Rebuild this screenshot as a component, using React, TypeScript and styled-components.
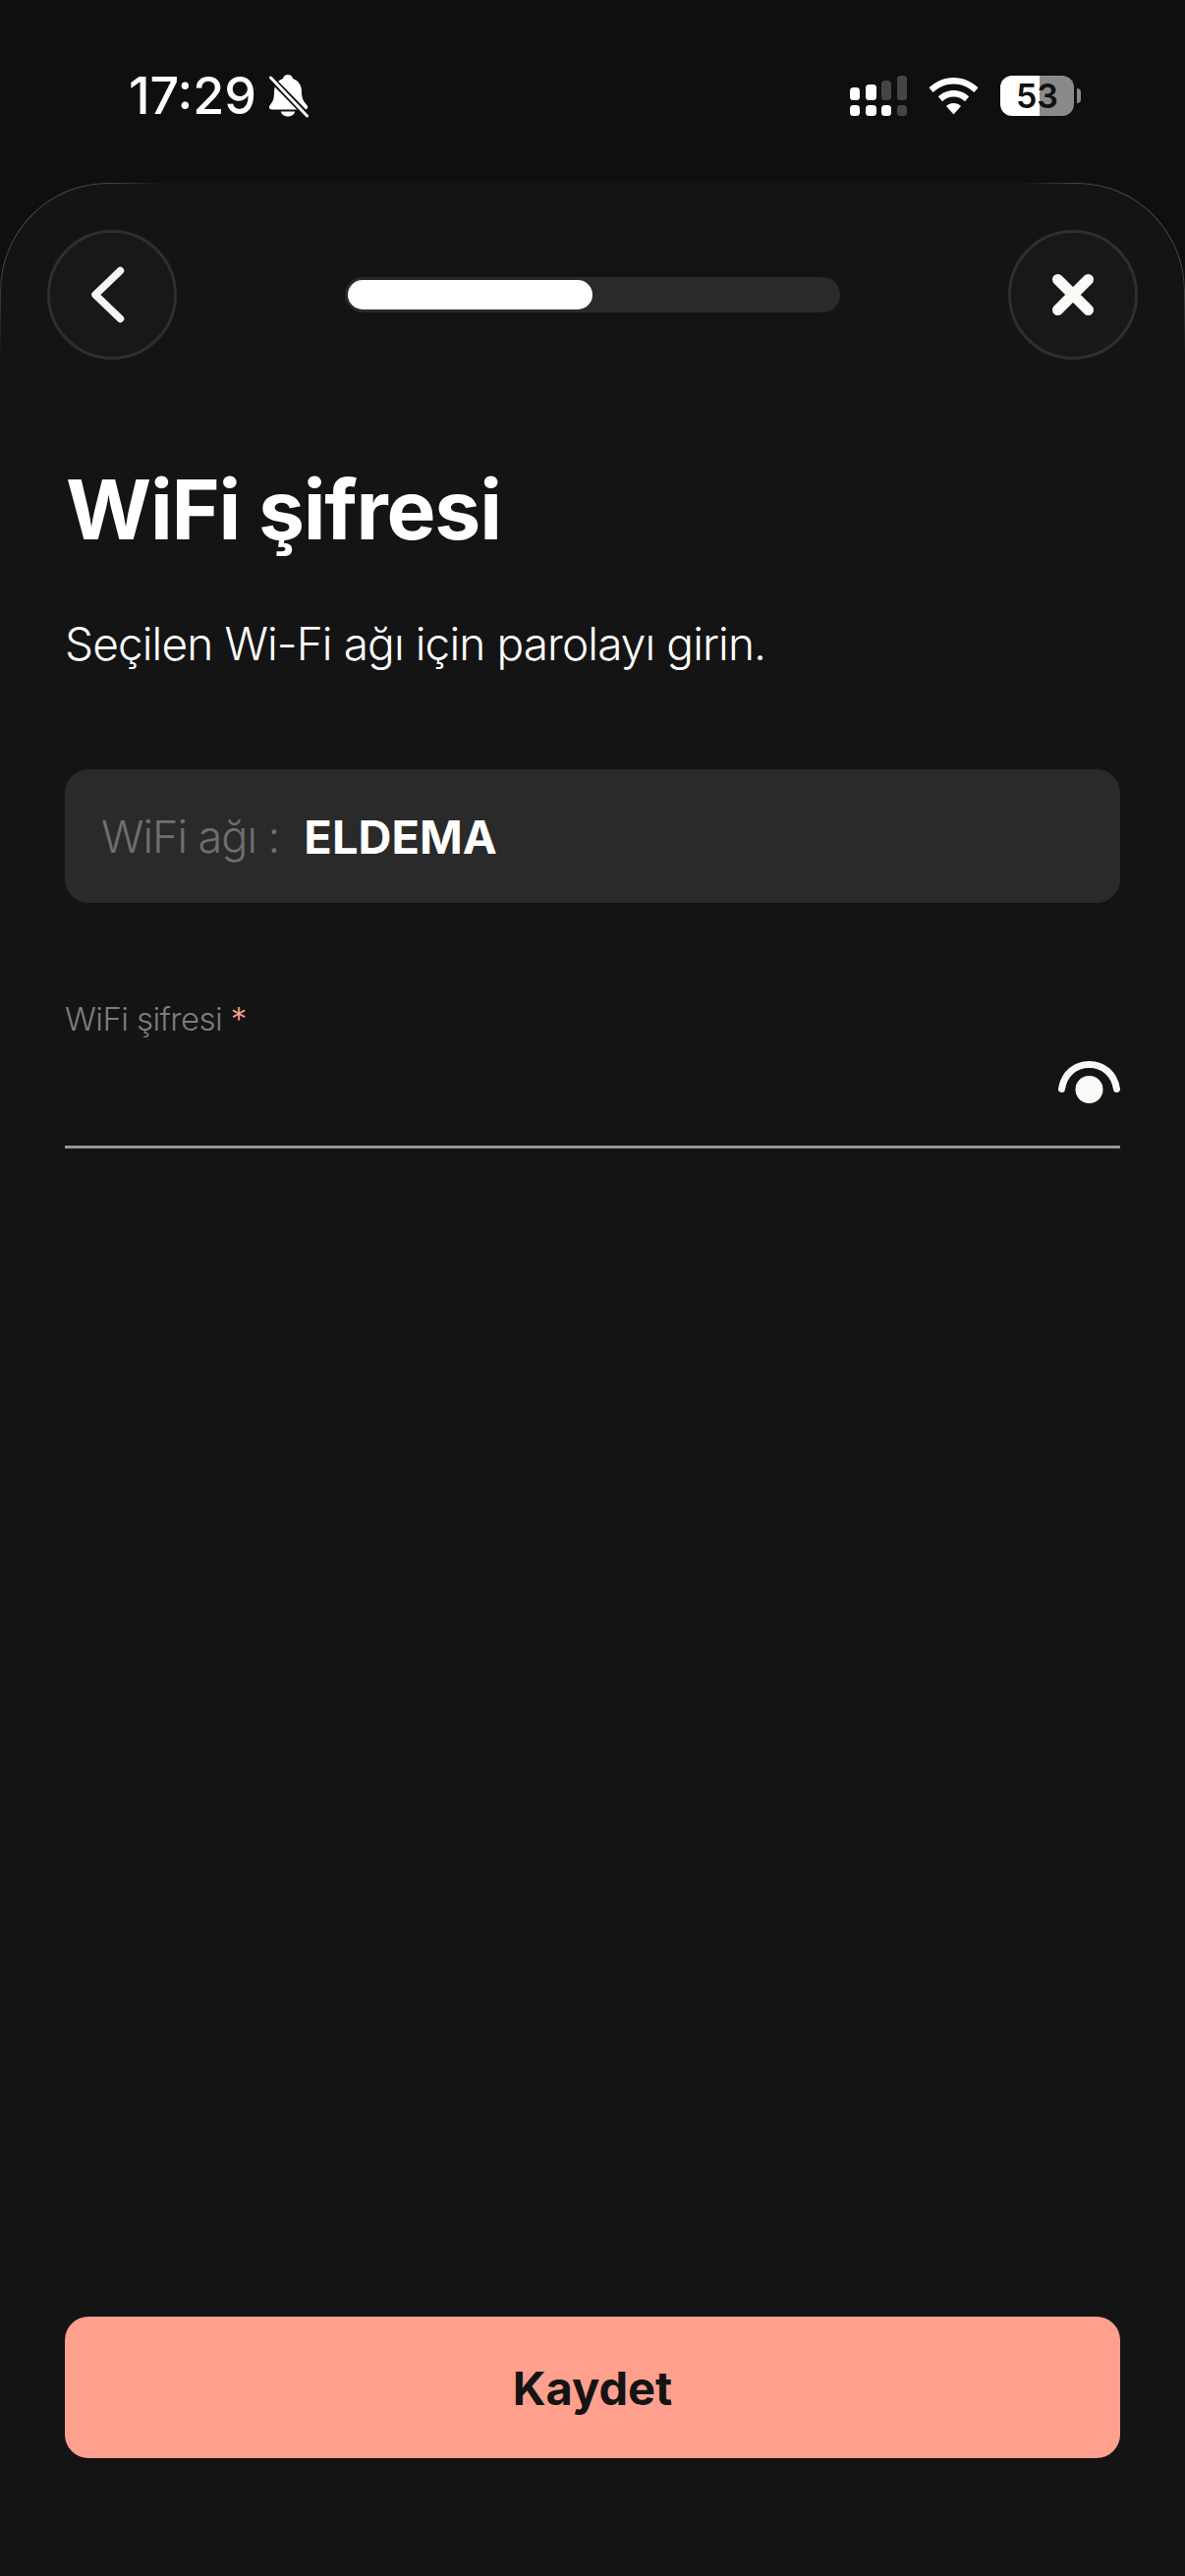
import React from "react";
import styled, { createGlobalStyle } from "styled-components";

const Global = createGlobalStyle`
  html, body { margin: 0; padding: 0; background: #0f0f0f; }
  * { box-sizing: border-box; }
  body { font-family: "Inter", "Noto Sans", sans-serif; }
`;

const Screen = styled.div`
  width: 1206px;
  height: 2622px;
  display: flex;
  flex-direction: column;
  background: #0f0f0f;
  overflow: hidden;
`;

const StatusBar = styled.header`
  height: 186px;
  flex: none;
  display: flex;
  justify-content: space-between;
  align-items: flex-start;
  padding: 77px 106px 0 131px;
`;

const StatusLeft = styled.div`
  display: flex;
  align-items: center;
  gap: 13px;
  height: 42px;
`;

const Clock = styled.span`
  font-size: 52px;
  font-weight: 500;
  line-height: 42px;
  letter-spacing: 0;
  color: #fff;
`;

const StatusRight = styled.div`
  display: flex;
  align-items: center;
  gap: 22px;
  height: 41px;
`;

const Battery = styled.div`
  display: flex;
  align-items: center;
  gap: 3px;
`;

const BatteryBody = styled.div`
  width: 75px;
  height: 41px;
  border-radius: 12px;
  background: linear-gradient(to right, #fff 0, #fff 40px, #8a8a8a 40px, #8a8a8a 100%);
  display: flex;
  align-items: center;
  justify-content: center;
  font-size: 34px;
  font-weight: 600;
  color: #111;
`;

const BatteryNub = styled.div`
  width: 4px;
  height: 15px;
  border-radius: 0 4px 4px 0;
  background: #8a8a8a;
`;

const Sheet = styled.main`
  position: relative;
  flex: 1;
  display: flex;
  flex-direction: column;
  background: #141414;
  border-radius: 110px 110px 0 0;
  padding: 48px 48px 120px;

  &::before {
    content: "";
    position: absolute;
    top: 0;
    left: 0;
    right: 0;
    height: 175px;
    border: 1px solid #505050;
    border-bottom: none;
    border-radius: 110px 110px 0 0;
    pointer-events: none;
    -webkit-mask-image:
      linear-gradient(to right, #000 0, #000 100px, transparent 165px, transparent calc(100% - 165px), #000 calc(100% - 100px), #000 100%),
      linear-gradient(to bottom, #000 0, #000 80px, transparent 100%);
    -webkit-mask-composite: source-in;
    mask-composite: intersect;
  }
`;

const TopBar = styled.nav`
  display: flex;
  align-items: center;
  justify-content: space-between;
  height: 132px;
  flex: none;
`;

const RoundButton = styled.button`
  width: 132px;
  height: 132px;
  flex: none;
  padding: 0;
  border-radius: 50%;
  border: 3px solid #2f2f2f;
  background: #181818;
  box-shadow: 0 0 24px rgba(255, 255, 255, 0.012);
  display: flex;
  align-items: center;
  justify-content: center;
`;

const Progress = styled.div`
  width: 504px;
  height: 36px;
  padding: 3px;
  border-radius: 18px;
  background: #2a2a2a;
`;

const ProgressFill = styled.div`
  height: 30px;
  border-radius: 15px;
  background: #fff;
`;

const Content = styled.section`
  flex: 1;
  display: flex;
  flex-direction: column;
  padding: 0 18px;
`;

const Title = styled.h1`
  margin: 105px 0 0 1px;
  font-size: 84px;
  line-height: 96px;
  font-weight: 700;
  letter-spacing: -1.2px;
  color: #fff;
`;

const Subtitle = styled.p`
  margin: 58px 0 0;
  font-size: 46px;
  line-height: 60px;
  font-weight: 300;
  letter-spacing: -0.9px;
  color: #fff;
`;

const NetworkBox = styled.div`
  margin-top: 98px;
  height: 136px;
  flex: none;
  border-radius: 24px;
  background: #2a2a2a;
  display: flex;
  align-items: center;
  gap: 25px;
  padding: 0 37px;
  font-size: 45px;
`;

const NetworkLabel = styled.span`
  font-weight: 300;
  color: #6f6f6f;
  letter-spacing: -1px;
`;

const NetworkName = styled.span`
  font-size: 47px;
  font-weight: 700;
  color: #fff;
`;

const Field = styled.label`
  margin-top: 98px;
  display: flex;
  flex-direction: column;
  border-bottom: 3px solid #979797;
  height: 152px;
  flex: none;
`;

const FieldLabel = styled.span`
  font-size: 33px;
  line-height: 40px;
  font-weight: 300;
  letter-spacing: -0.6px;
  color: #7d7d7d;
`;

const Required = styled.span`
  color: #ffa08e;
`;

const FieldRow = styled.div`
  display: flex;
  justify-content: flex-end;
  padding-top: 23px;
`;

const Spacer = styled.div`
  flex: 1;
`;

const SaveButton = styled.button`
  height: 144px;
  flex: none;
  border: none;
  border-radius: 24px;
  background: #ffa08e;
  color: #141414;
  font-family: inherit;
  font-size: 47px;
  font-weight: 700;
`;

const BackGlyph = styled.svg`
  margin-right: 8px;
`;

const SignalIcon = () => (
  <svg width="58" height="41" viewBox="0 0 58 41">
    <g fill="#fff">
      <rect x="0" y="12" width="10" height="13" rx="3.5" />
      <rect x="16" y="9" width="11" height="16" rx="3.5" />
      <rect x="0" y="30" width="10" height="11" rx="3.5" />
      <rect x="16" y="30" width="11" height="11" rx="3.5" />
      <rect x="32" y="30" width="10" height="11" rx="3.5" />
    </g>
    <g fill="#454545">
      <rect x="32" y="5" width="10" height="20" rx="3.5" />
      <rect x="48" y="0" width="10" height="25" rx="3.5" />
      <rect x="48" y="30" width="10" height="11" rx="3.5" />
    </g>
  </svg>
);

const WifiIcon = () => (
  <svg width="51" height="38" viewBox="0 0 51 38">
    <path fill="#fff" d="M25.5 0C35 0 43.8 3.8 50.5 10.2L46.4 15C40.8 9.6 33.5 6.4 25.5 6.4S10.2 9.6 4.6 15L.5 10.2C7.2 3.8 16 0 25.5 0Z" />
    <path fill="#fff" d="M25.5 13c6 0 11.6 2.4 15.7 6.3l-4.2 4.9c-3-2.8-7-4.6-11.5-4.6S17 21.4 14 24.2l-4.2-4.9C13.9 15.4 19.5 13 25.5 13Z" />
    <path fill="#fff" d="M25.5 26c2.9 0 5.5 1.1 7.5 2.9L25.5 37.5 18 28.9C20 27.1 22.6 26 25.5 26Z" />
  </svg>
);

const BellOffIcon = () => (
  <svg width="40" height="44" viewBox="0 0 40 44">
    <path fill="#fff" d="M19 0c2.500 0 4.500 1.500 5 4C30 6 33 11 33 18c0 6 2 9 4.500 12 1.500 1.700 2 3 1.500 4-.5 1-2 1.500-4 1.500H4c-2 0-3.500-.5-4-1.500-.5-1 0-2.300 1.500-4C4 27 5 24 5 18 5 11 8 6 14 4c.5-2.500 2.500-4 5-4Z" />
    <path fill="#fff" d="M12 37.500h14c0 2.500-3 5-7 5s-7-2.500-7-5Z" />
    <path fill="none" stroke="#0f0f0f" strokeWidth="6.500" d="M-1 1 40 43" />
    <path fill="none" stroke="#fff" strokeWidth="3" strokeLinecap="round" d="M1.500 3 38.500 42" />
  </svg>
);

const BackIcon = () => (
  <BackGlyph width="36" height="60" viewBox="0 0 36 60">
    <path fill="none" stroke="#f4f4f2" strokeWidth="7.500" strokeLinecap="round" strokeLinejoin="round" d="M30.500 5.500 5 30 30.500 54.500" />
  </BackGlyph>
);

const CloseIcon = () => (
  <svg width="44" height="44" viewBox="0 0 44 44">
    <path fill="none" stroke="#faf9f5" strokeWidth="11" strokeLinecap="round" d="M6.500 6.500 37.500 37.500M37.500 6.500 6.500 37.500" />
  </svg>
);

const EyeIcon = () => (
  <svg width="63" height="44" viewBox="0 0 63 44">
    <path fill="none" stroke="#faf9f5" strokeWidth="7" strokeLinecap="round" d="M3.500 28.500C6 13 17 3.500 31.500 3.500S57 13 59.500 28.500" />
    <circle cx="31.500" cy="29" r="14" fill="#faf9f5" />
  </svg>
);

export default function App() {
  return (
    <Screen>
      <Global />
      <StatusBar>
        <StatusLeft>
          <Clock>17:29</Clock>
          <BellOffIcon />
        </StatusLeft>
        <StatusRight>
          <SignalIcon />
          <WifiIcon />
          <Battery>
            <BatteryBody>53</BatteryBody>
            <BatteryNub />
          </Battery>
        </StatusRight>
      </StatusBar>
      <Sheet>
        <TopBar>
          <RoundButton aria-label="Geri"><BackIcon /></RoundButton>
          <Progress><ProgressFill style={{ width: "50%" }} /></Progress>
          <RoundButton aria-label="Kapat"><CloseIcon /></RoundButton>
        </TopBar>
        <Content>
          <Title>WiFi şifresi</Title>
          <Subtitle>Seçilen Wi-Fi ağı için parolayı girin.</Subtitle>
          <NetworkBox>
            <NetworkLabel>WiFi ağı :</NetworkLabel>
            <NetworkName>ELDEMA</NetworkName>
          </NetworkBox>
          <Field>
            <FieldLabel>WiFi şifresi <Required>*</Required></FieldLabel>
            <FieldRow><EyeIcon /></FieldRow>
          </Field>
          <Spacer />
          <SaveButton>Kaydet</SaveButton>
        </Content>
      </Sheet>
    </Screen>
  );
}
